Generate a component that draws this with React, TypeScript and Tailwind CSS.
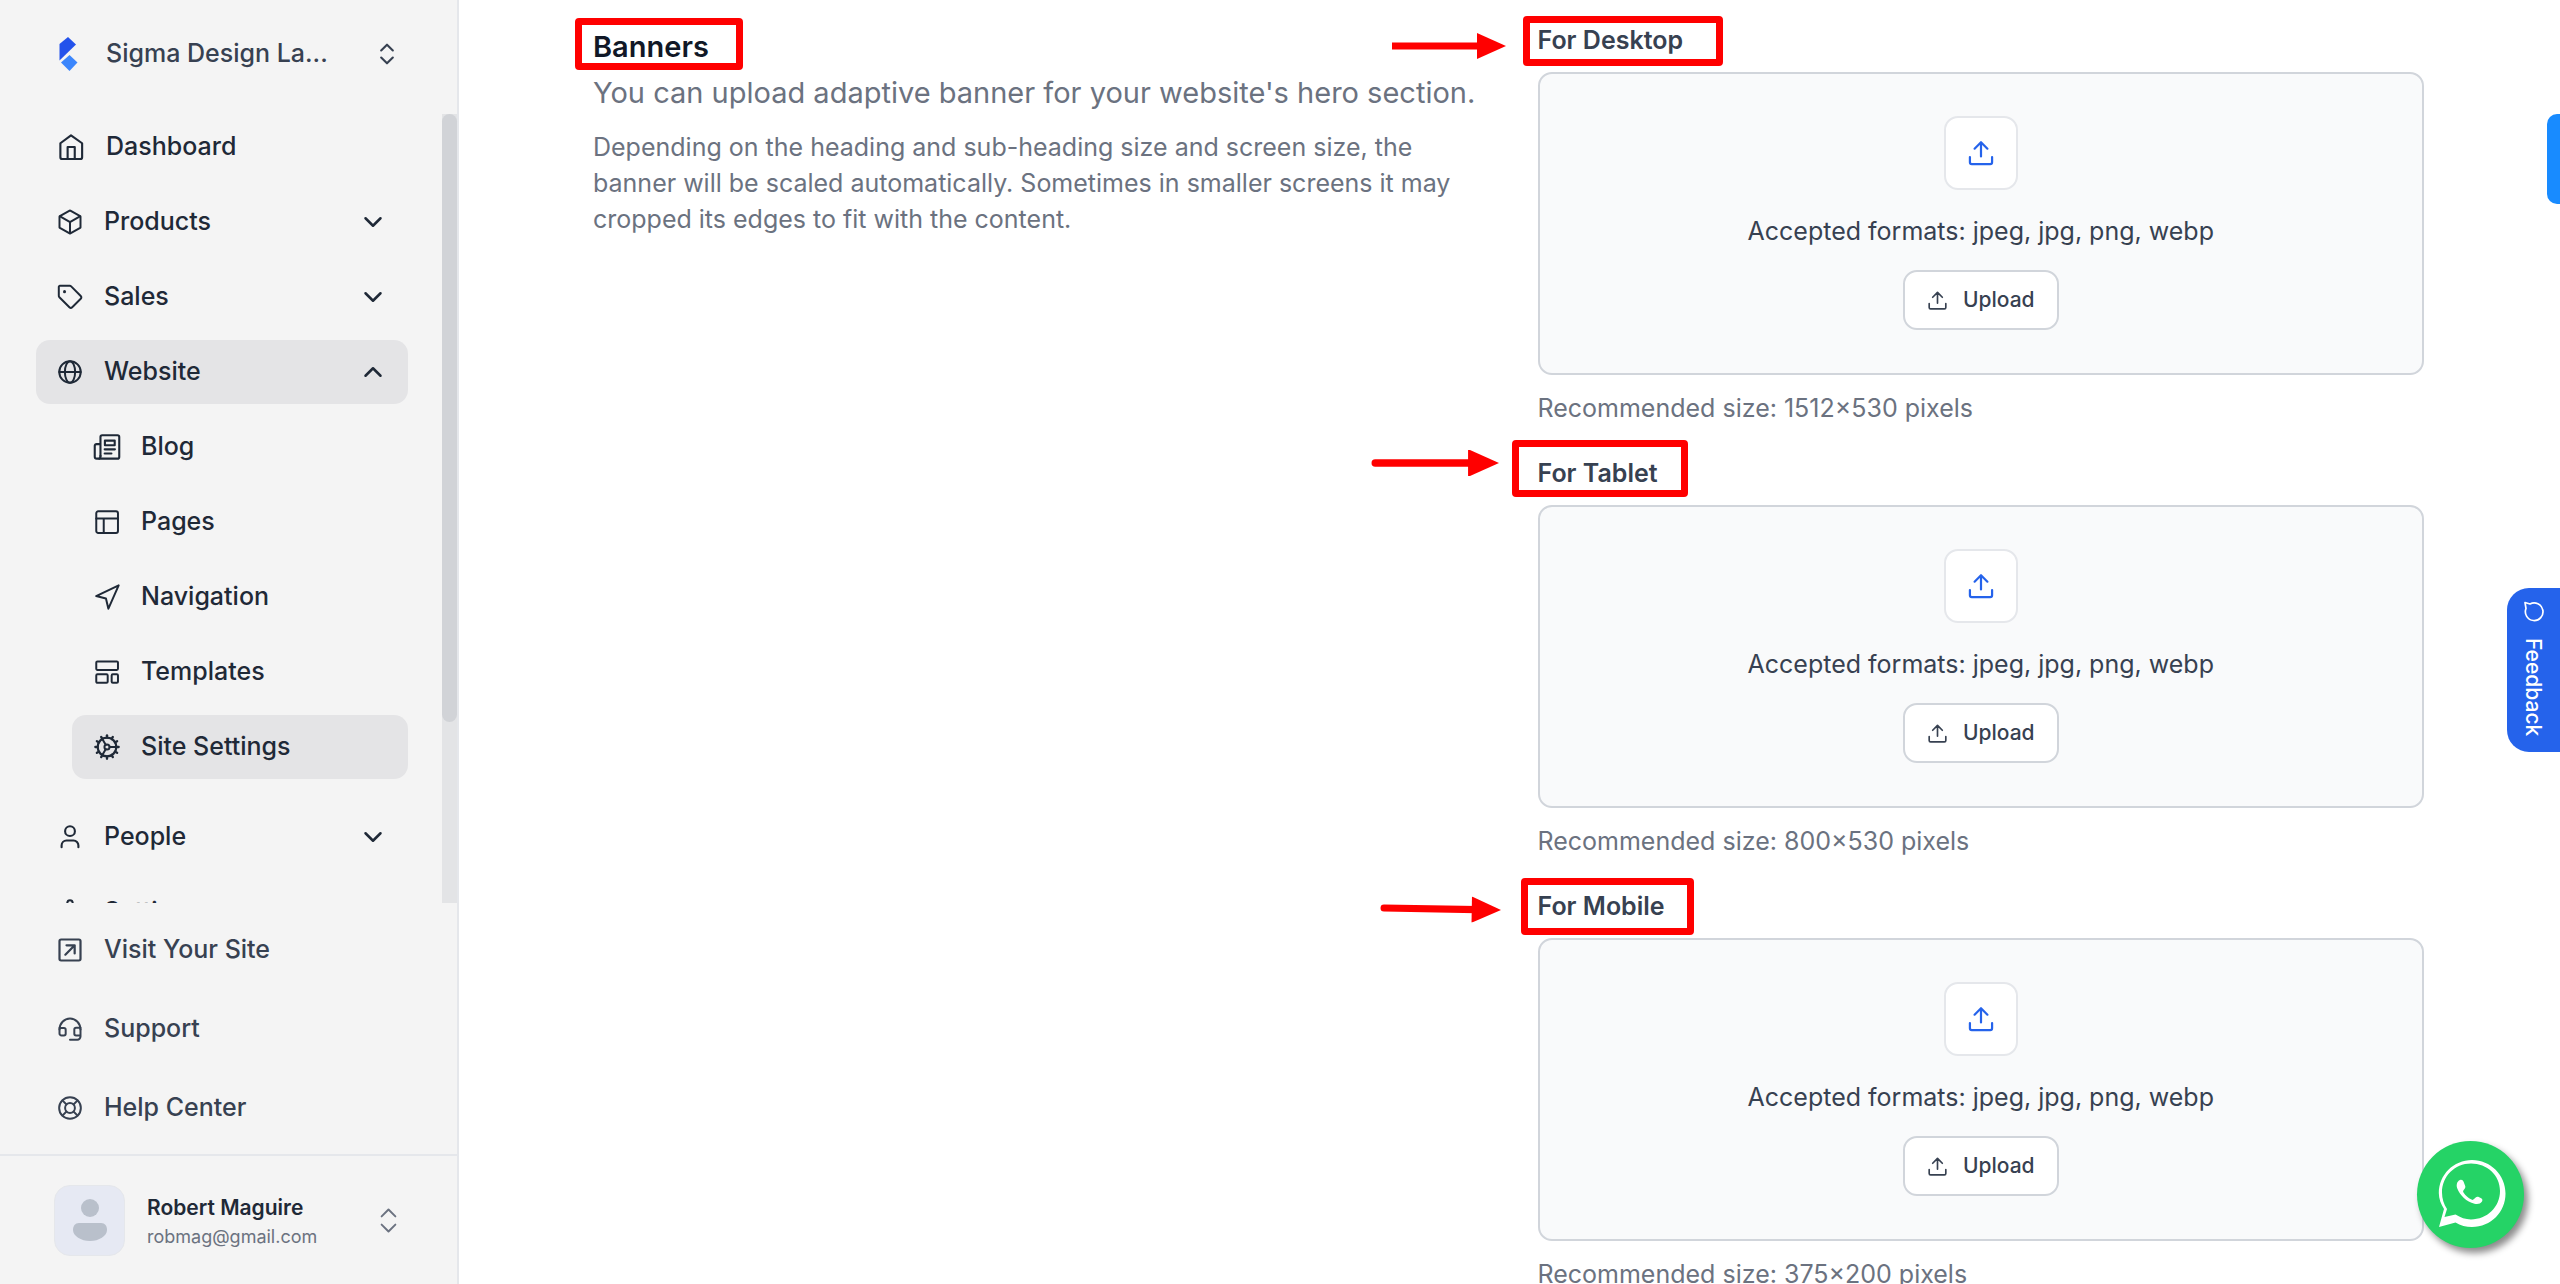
import React from "react";
import { ChevronDown, ChevronUp, ChevronsUpDown, Settings } from "lucide-react";

type IconProps = {
  size?: number;
  stroke?: number;
  className?: string;
  children: React.ReactNode;
};

const Icon = ({ size = 28, stroke = 1.7, className, children }: IconProps) => (
  <svg
    width={size}
    height={size}
    viewBox="0 0 24 24"
    fill="none"
    stroke="currentColor"
    strokeWidth={stroke}
    strokeLinecap="round"
    strokeLinejoin="round"
    className={className}
    aria-hidden="true"
  >
    {children}
  </svg>
);

const HomeIcon = () => (
  <Icon size={30}>
    <path d="M3.5 9 12 2.7 20.9 9v11.1a1.5 1.5 0 0 1-1.5 1.5H5a1.5 1.5 0 0 1-1.5-1.5Z" />
    <path d="M9.3 21.6V12H15v9.6" />
  </Icon>
);

const BoxIcon = () => (
  <Icon>
    <path d="M21 7.4v9.2a.6.6 0 0 1-.3.5l-8.4 4.7a.6.6 0 0 1-.6 0l-8.4-4.7a.6.6 0 0 1-.3-.5V7.4a.6.6 0 0 1 .3-.5l8.4-4.7a.6.6 0 0 1 .6 0l8.4 4.7a.6.6 0 0 1 .3.5Z" />
    <path d="m3.5 7.2 8.2 4.6a.6.6 0 0 0 .6 0l8.2-4.6M12 21v-9" />
  </Icon>
);

const TagIcon = () => (
  <Icon>
    <path d="M2.4 10.8V3.3a.9.9 0 0 1 .9-.9h8.5c.5 0 .9.2 1.2.5l8.2 8.2c.7.7.7 1.7 0 2.4l-7.3 7.3a1.7 1.7 0 0 1-2.4 0L2.9 12.2a1.7 1.7 0 0 1-.5-1.4Z" />
    <path d="M7.3 7.4h.01" strokeWidth="2.6" />
  </Icon>
);

const GlobeIcon = () => (
  <Icon>
    <circle cx="12" cy="12" r="9.2" />
    <ellipse cx="12" cy="12" rx="4.4" ry="9.2" />
    <path d="M2.8 12h18.4" />
  </Icon>
);

const BlogIcon = () => (
  <Icon stroke={1.8}>
    <path d="M6.4 20V3.4a1.5 1.5 0 0 1 1.5-1.5H21a1.5 1.5 0 0 1 1.5 1.5V20.5a1.5 1.5 0 0 1-1.5 1.5H3.2a1.7 1.7 0 0 1-1.7-1.7V11a1.5 1.5 0 0 1 1.5-1.5h3.4" />
    <path d="M6.4 19.5a2.4 2.4 0 0 1-1 2.5M10.2 6.5h8.4v4h-8.4ZM10 14h8.8M10 17.6h5.8" />
  </Icon>
);

const PagesIcon = () => (
  <Icon>
    <rect x="2.8" y="2.8" width="18.6" height="18.6" rx="1.7" />
    <path d="M2.8 8.9h18.6M9.2 8.9v12.5" />
  </Icon>
);

const NavigationIcon = () => (
  <Icon>
    <path d="M22 2 2.7 11.2l8.4 2.1 2.1 8.7Z" />
  </Icon>
);

const TemplatesIcon = () => (
  <Icon>
    <rect x="2.8" y="2.9" width="18.6" height="7.3" rx="1" />
    <rect x="2.8" y="14" width="9.8" height="7.3" rx="1" />
    <rect x="16" y="14" width="5.4" height="7.3" rx="1" />
  </Icon>
);

const CogIcon = () => (
  <Icon>
    <circle cx="12" cy="12" r="8" strokeWidth="1.9" />
    <circle cx="12" cy="12" r="2.2" />
    <path d="M14.2 12H20M10.9 10.1 8 5.1M10.9 13.9 8 18.9" />
    {[0, 30, 60, 90, 120, 150, 180, 210, 240, 270, 300, 330].map((deg) => (
      <path key={deg} d="M12 4V2" strokeWidth="2" transform={`rotate(${deg} 12 12)`} />
    ))}
  </Icon>
);

const PersonIcon = () => (
  <Icon stroke={1.8}>
    <circle cx="12" cy="7" r="4.2" />
    <path d="M4.8 20.8v-1.6a4.2 4.2 0 0 1 4.2-4.2h6a4.2 4.2 0 0 1 4.2 4.2v1.6" />
  </Icon>
);

const VisitIcon = () => (
  <Icon stroke={1.9}>
    <rect x="3" y="3" width="18" height="18" rx="1.4" />
    <path d="M8 16l8-8M9 8h7v7" />
  </Icon>
);

const HeadsetIcon = () => (
  <Icon>
    <path d="M3 12.5A9 9.5 0 0 1 21 12.5" />
    <path d="M3 12v3.8a1.7 1.7 0 0 0 1.7 1.7h2.1a1.5 1.5 0 0 0 1.5-1.5v-3.400a1.5 1.5 0 0 0-1.5-1.5H3M21 11h-3.8a1.5 1.5 0 0 0-1.5 1.5V16a1.5 1.5 0 0 0 1.5 1.5H21M21 12v6.5a2.7 2.7 0 0 1-2.7 2.7H12" />
  </Icon>
);

const LifebuoyIcon = () => (
  <Icon>
    <circle cx="12" cy="12" r="9.3" />
    <circle cx="12" cy="12" r="4.2" />
    <path d="m5.5 5.5 3.5 3.5M15 15l3.5 3.5M18.5 5.5 15 9M9 15l-3.5 3.5" />
  </Icon>
);

const UploadIcon = ({ size, className }: { size: number; className?: string }) => (
  <Icon size={size} stroke={1.9} className={className}>
    <path d="M12 15V3M6.5 8.3 12 2.8l5.5 5.5M2.5 15.5v4.4a1.6 1.6 0 0 0 1.6 1.6h15.800a1.6 1.6 0 0 0 1.6-1.6v-4.4" />
  </Icon>
);

const Logo = () => (
  <svg width="28" height="36" viewBox="0 0 28 36" aria-hidden="true">
    <path d="M3.5 8 12 1l8 7.5L3.5 24.5Z" fill="#2352eb" />
    <path d="m13.5 19 8 7.5-8 8.5L5 26.5Z" fill="#3b86fc" />
  </svg>
);

const Avatar = () => (
  <span className="flex size-[71px] shrink-0 items-center justify-center rounded-2xl border border-gray-200 bg-[#e6e9f3]">
    <svg width="36" height="44" viewBox="0 0 36 44" fill="#b9c0cb" aria-hidden="true">
      <circle cx="18" cy="10" r="9" />
      <path d="M7 25h22c4 0 6 3 6 7 0 6-8 11-17 11S1 38 1 32c0-4 2-7 6-7Z" />
    </svg>
  </span>
);

const Arrow = ({ className }: { className: string }) => (
  <svg viewBox="0 0 120 26" preserveAspectRatio="xMaxYMid slice" className={className} aria-hidden="true">
    <path d="M4 13h92" stroke="#f00" strokeWidth="7" strokeLinecap="round" />
    <path d="M91 0v26l29-13Z" fill="#f00" />
  </svg>
);

const menu = [
  { label: "Dashboard", icon: HomeIcon },
  { label: "Products", icon: BoxIcon, expandable: true },
  { label: "Sales", icon: TagIcon, expandable: true },
];

const websiteMenu = [
  { label: "Blog", icon: BlogIcon },
  { label: "Pages", icon: PagesIcon },
  { label: "Navigation", icon: NavigationIcon },
  { label: "Templates", icon: TemplatesIcon },
  { label: "Site Settings", icon: CogIcon, active: true },
];

const links = [
  { label: "Visit Your Site", icon: VisitIcon },
  { label: "Support", icon: HeadsetIcon },
  { label: "Help Center", icon: LifebuoyIcon },
];

const banners = [
  {
    id: "desktop",
    label: "For Desktop",
    size: "1512×530",
    box: "-left-[15px] -top-[4px] w-[200px] h-[50px]",
    arrow: "-left-[146px] top-[13px] w-[114px]",
  },
  {
    id: "tablet",
    label: "For Tablet",
    size: "800×530",
    box: "-left-[26px] -top-[13px] w-[176px] h-[57px]",
    arrow: "-left-[167px] -top-[3px] w-[128px]",
  },
  {
    id: "mobile",
    label: "For Mobile",
    size: "375×200",
    box: "-left-[17px] -top-[8px] w-[173px] h-[57px]",
    arrow: "-left-[158px] top-[10px] w-[121px] rotate-1",
  },
];

const Sidebar = () => {
  return (
    <aside className="flex h-full w-[459px] shrink-0 flex-col border-r-2 border-gray-200 bg-[#f4f4f4] text-[25px] font-medium text-[#1f2937]">
      <button className="flex h-[108px] shrink-0 items-center px-14 text-[#374151]">
        <Logo />
        <span className="ml-[22px] flex-1 text-left">Sigma Design La...</span>
        <ChevronsUpDown size={28} strokeWidth={1.8} />
      </button>

      <div className="mt-[6px] flex min-h-0 flex-1">
        <nav className="flex flex-1 flex-col gap-[11px] overflow-hidden pt-px pr-[34px] pl-9">
          {menu.map(({ label, icon: ItemIcon, expandable }) => (
            <button key={label} className="flex h-16 shrink-0 items-center gap-5 px-5">
              <ItemIcon />
              <span className="flex-1 text-left">{label}</span>
              {expandable && <ChevronDown size={30} />}
            </button>
          ))}
          <button className="flex h-16 shrink-0 items-center gap-5 rounded-[14px] bg-[#e4e4e6] px-5">
            <GlobeIcon />
            <span className="flex-1 text-left">Website</span>
            <ChevronUp size={30} />
          </button>
          <div className="mb-[15px] flex shrink-0 flex-col gap-[11px] pl-9">
            {websiteMenu.map(({ label, icon: ItemIcon, active }) => (
              <a
                key={label}
                href="#"
                className={`flex h-16 items-center gap-5 rounded-[14px] px-[21px] ${active ? "bg-[#e4e4e6]" : ""}`}
              >
                <ItemIcon />
                {label}
              </a>
            ))}
          </div>
          <button className="flex h-16 shrink-0 items-center gap-5 px-5">
            <PersonIcon />
            <span className="flex-1 text-left">People</span>
            <ChevronDown size={30} />
          </button>
          <button className="flex h-16 shrink-0 items-center gap-5 px-5">
            <Settings size={28} strokeWidth={1.7} />
            <span>Settings</span>
          </button>
        </nav>
        <div className="w-[15px] bg-[#e3e4e6]">
          <div className="h-[77%] rounded-lg bg-[#d1d3d7]" />
        </div>
      </div>

      <div className="flex flex-col py-[7px] pl-14 text-[#374151]">
        {links.map(({ label, icon: ItemIcon }) => (
          <a key={label} href="#" className="flex h-[79px] items-center gap-5">
            <ItemIcon />
            {label}
          </a>
        ))}
      </div>

      <button className="flex h-[130px] shrink-0 items-center border-t-2 border-gray-200 pr-[52px] pl-[54px] text-left">
        <Avatar />
        <span className="ml-[22px] flex flex-1 flex-col pt-1">
          <span className="text-[21px] leading-[30px] font-semibold">Robert Maguire</span>
          <span className="text-lg leading-7 font-normal text-[#6b7280]">robmag@gmail.com</span>
        </span>
        <ChevronsUpDown size={33} strokeWidth={1.4} className="text-[#6b7280]" />
      </button>
    </aside>
  );
};

const BannerUpload = ({ id, label, size, box, arrow }: (typeof banners)[number]) => {
  return (
    <div>
      <div className="relative mb-3 h-10">
        <h3 id={id} className="text-[25px] leading-10 font-semibold text-[#374151]">
          {label}
        </h3>
        <div className={`absolute rounded-sm border-[7px] border-[#f00] ${box}`} />
        <Arrow className={`absolute h-[26px] ${arrow}`} />
      </div>
      <div className="flex flex-col items-center rounded-[14px] border-2 border-[#d1d5db] bg-[#f9fafb] pt-[42px] pb-[43px]">
        <div className="flex size-[74px] items-center justify-center rounded-[14px] border-2 border-[#e5e7eb] bg-white text-[#2563eb]">
          <UploadIcon size={28} />
        </div>
        <p className="mt-[22px] text-[25px] leading-[38px] text-[#374151]">
          Accepted formats: jpeg, jpg, png, webp
        </p>
        <button
          aria-describedby={id}
          className="mt-5 flex h-[60px] items-center gap-[15px] rounded-[14px] border-2 border-[#d1d5db] bg-white px-[22px] text-[21px] font-medium text-[#374151]"
        >
          <UploadIcon size={21} />
          Upload
        </button>
      </div>
      <p className="mt-[13px] text-[25px] leading-10 text-[#6b7280]">
        Recommended size: {size} pixels
      </p>
    </div>
  );
};

const WhatsAppButton = () => (
  <button
    aria-label="WhatsApp"
    className="absolute right-9 bottom-9 size-[107px] rounded-full bg-[#25d366] shadow-[4px_5px_7px_#8c8c8c]"
  >
    <svg viewBox="0 0 107 107" aria-hidden="true">
      <path
        fill="#fff"
        fillRule="evenodd"
        d="M55 19c18.5 0 33.5 15 33.5 33.5S74 86 55 86c-6 0-11.5-1.5-16.5-4.5L22 86l5-18c-3-5-5.2-10-5.2-16C21.8 34 36.5 19 55 19Zm-1 3.5C37.5 22.5 25 35.5 25 51.5c0 6.5 1.8 11.5 5 16.5l-2.5 8 11-2.5c5 3.2 10 4.9 15.5 4.9 16 0 29-12.4 29-28.4S70 22.5 54 22.5Z"
      />
      <path
        fill="#fff"
        d="M43 39c1.7-.6 3 .2 3.6 1.8l1.6 4.3c.5 1.5-.3 2.7-1.5 4-.7.9-.8 1.5-.2 2.5 2 3.2 4.6 5.3 8 7 1 .5 1.8.4 2.5-.5 1.4-1.8 2.7-2.9 4.2-2.3l3 1.4c1.4.7 1.5 2 .8 3.3-1.4 2.3-4.4 3-7.5 2.2-8-2-14.5-8.2-17.3-15.5-1.1-3-.4-6.9 2.8-8.2Z"
      />
    </svg>
  </button>
);

const App = () => {
  return (
    <div className="relative flex h-screen overflow-hidden bg-white font-[Inter,sans-serif]">
      <Sidebar />
      <main className="grid min-w-0 flex-1 grid-cols-2 content-start gap-x-[58px] overflow-hidden pt-5 pr-[136px] pl-[134px]">
        <section>
          <div className="relative">
            <h2 className="text-[29px] leading-[53px] font-semibold text-[#111827]">Banners</h2>
            <div className="absolute -top-0.5 -left-[18px] h-[52px] w-[168px] rounded-sm border-[7px] border-[#f00]" />
          </div>
          <p className="text-[29px] leading-10 text-[#6b7280]">
            You can upload adaptive banner for your website's hero section.
          </p>
          <p className="mt-4 text-[25px] leading-9 text-[#6b7280]">
            Depending on the heading and sub-heading size and screen size, the banner will be scaled
            automatically. Sometimes in smaller screens it may cropped its edges to fit with the
            content.
          </p>
        </section>
        <section className="flex flex-col gap-[25px]">
          {banners.map((banner) => (
            <BannerUpload key={banner.id} {...banner} />
          ))}
        </section>
      </main>

      <button
        aria-label="Open panel"
        className="absolute top-[114px] right-0 h-[90px] w-[13px] rounded-l-[10px] bg-[#188bff]"
      />
      <button className="absolute top-[588px] right-0 flex h-[164px] w-[53px] items-center gap-[14px] rounded-l-[22px] bg-[#2563eb] pt-3 text-[21px] font-medium text-white [writing-mode:vertical-rl]">
        <Icon size={24} stroke={1.7} className="rotate-90">
          <path d="M2.5 21 4 16A8.8 8.8 0 1 1 8.5 20Z" />
        </Icon>
        Feedback
      </button>
      <WhatsAppButton />
    </div>
  );
};

export default App;
